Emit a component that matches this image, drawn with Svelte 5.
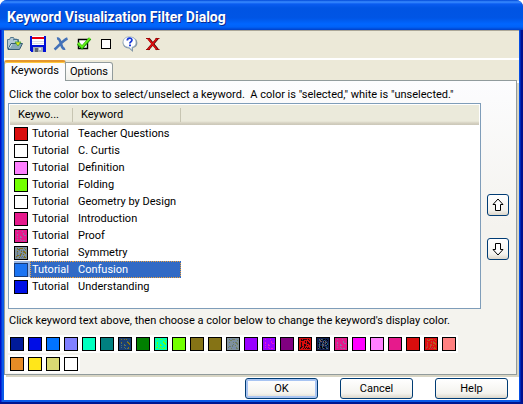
<script>
  let rows = $state([
    { word: 'Teacher Questions', color: '#d90d0d' },
    { word: 'C. Curtis', color: '#ffffff' },
    { word: 'Definition', color: '#ff80ff' },
    { word: 'Folding', color: '#73ff00' },
    { word: 'Geometry by Design', color: '#ffffff' },
    { word: 'Introduction', color: '#e61a8c' },
    { word: 'Proof', color: '#e61a8c', dots: ['#8c73a6'], density: 16 },
    { word: 'Symmetry', color: '#80929c', dots: ['#857315', '#5a7090'], density: 52 },
    { word: 'Confusion', color: '#1a73f2' },
    { word: 'Understanding', color: '#0010e6' }
  ]);
  let selected = $state(8);

  const palette = [
    { color: '#001a99' }, { color: '#000de6' }, { color: '#0073ff' }, { color: '#8080ff' },
    { color: '#00ffc0' }, { color: '#008080' },
    { color: '#1a4073', dots: ['#857315', '#4a7378'], density: 28 },
    { color: '#008000' },
    { color: '#00ffb0', dots: ['#73ff00'], density: 30 },
    { color: '#73ff00' }, { color: '#857315' }, { color: '#857315' },
    { color: '#80929c', dots: ['#6f7f60', '#7088b8'], density: 50 },
    { color: '#9900ff' },
    { color: '#9900ff', dots: ['#e61acc'], density: 18 },
    { color: '#800080' },
    { color: '#d90d0d', dots: ['#400010', '#101010'], density: 48 },
    { color: '#102050', dots: ['#6b5a60', '#000000', '#206078'], density: 60 },
    { color: '#e61a8c', dots: ['#8c73a6'], density: 20 },
    { color: '#ff00ff' }, { color: '#ff80ff' }, { color: '#e61a8c' }, { color: '#d90d0d' },
    { color: '#e01010', dots: ['#b86018', '#c03050'], density: 46 },
    { color: '#ff8080' }, { color: '#e68c26' }, { color: '#ffe61a' }, { color: '#d9d973' },
    { color: '#ffffff' }
  ];

  // Scattered single pixels of the dithered colours
  function speckles(item) {
    const out = [];
    let seed = 7;
    for (let y = 1; y < 11; y++) {
      for (let x = 1; x < 11; x++) {
        seed = (seed * 1103515245 + 12345) % 2147483648;
        const n = Math.floor(seed / 65536) % 100;
        if (n < item.density) out.push({ x, y, fill: item.dots[n % item.dots.length] });
      }
    }
    return out;
  }

  function recolor(item) {
    const row = rows[selected];
    row.color = item.color;
    row.dots = item.dots;
    row.density = item.density;
  }
</script>

{#snippet chip(item)}
  <svg width="12" height="12" viewBox="0 0 12 12" shape-rendering="crispEdges" aria-hidden="true">
    <rect width="12" height="12" fill={item.color} />
    {#if item.dots}
      {#each speckles(item) as s}
        <rect x={s.x} y={s.y} width="1" height="1" fill={s.fill} />
      {/each}
    {/if}
  </svg>
{/snippet}

<main class="dialog">
  <header class="title"><h1>Keyword Visualization Filter Dialog</h1></header>
  <div class="body">
    <div class="toolbar">
      <button aria-label="Open">
        <svg width="16" height="16" viewBox="0 0 16 16">
          <path d="M.5 12.500V3.500h2l1-2h3l1 2h4v9z" fill="#b4cad4" stroke="#54788c" />
          <path d="M1 13.500L4 7.500h11.500l-3 6z" fill="#88a9ba" stroke="#365d75" />
          <path d="M2.500 12l2.500-4" stroke="#dce8ee" fill="none" />
          <path d="M6 4c4-2 5.500 0 5 3" fill="none" stroke="#356a8c" />
          <path d="M8 6h6L11 10z" fill="#e8e51a" stroke="#3aa03a" stroke-width=".8" />
        </svg>
      </button>
      <button aria-label="Save">
        <svg width="16" height="16" viewBox="0 0 16 16" shape-rendering="crispEdges">
          <path d="M0 0h16v16H1l-1-1z" fill="#0010d8" />
          <path d="M2 0h12v9H2z" fill="#fff" />
          <path d="M2 1h12v2H2z" fill="#e80010" />
          <path d="M2 5h12v1H2zM2 7h12v1H2z" fill="#e0e0e8" />
          <path d="M3 11h10v5H3z" fill="#a8b0b8" />
          <path d="M5 12h3v4H5z" fill="#606870" />
          <path d="M9 12h2v2H9z" fill="#e8eaec" />
        </svg>
      </button>
      <button aria-label="Remove">
        <svg width="16" height="16" viewBox="0 0 16 16">
          <path d="M4 2.500C7 2 7 5 8 8s2 5.500 4 4.500M14.500 2.500C10 4 6 10 1.500 13.500" fill="none" stroke="#4472b8" stroke-width="2.600" />
        </svg>
      </button>
      <button aria-label="Select all">
        <svg width="16" height="16" viewBox="0 0 16 16">
          <path d="M2.500 3.500h9v9h-9z" fill="#fff" stroke="#000" stroke-width="1.400" />
          <path d="M2 7.500l4 4L14 2.500" fill="none" stroke="#1a9a00" stroke-width="3.200" />
          <path d="M2 7l4 4L14 2" fill="none" stroke="#66f01a" stroke-width="1.800" />
        </svg>
      </button>
      <button aria-label="Unselect all">
        <svg width="16" height="16" viewBox="0 0 16 16" shape-rendering="crispEdges">
          <path d="M2.500 3.500h9v9h-9z" fill="#fff" stroke="#000" />
        </svg>
      </button>
      <button aria-label="Help topics">
        <svg width="16" height="16" viewBox="0 0 16 16">
          <path d="M8 1c9 0 9.500 10 3 11v4l-4-3.500C-2 12-1 1 8 1z" fill="#8295a5" />
          <path d="M7.500.8c8 0 8.500 9.400 2.500 10.400v3L7 11.400C-1 11-1 .8 7.500.8z" fill="#fff" stroke="#91a8bc" stroke-width=".8" />
          <path d="M5.300 4.500c0-3 4.700-3 4.700-.5 0 1.800-2.200 1.600-2.200 3.500" fill="none" stroke="#1738d8" stroke-width="1.700" />
          <path d="M7 8.500h2v1.800H7z" fill="#1738d8" />
        </svg>
      </button>
      <button aria-label="Delete">
        <svg width="16" height="16" viewBox="0 0 16 16">
          <path d="M3.500 2.500L12.500 13.500M12.500 2.500L3 13.500" stroke="#400" stroke-width="2.600" />
          <path d="M3 2.500L12 13.500M12 2.500L3 13.500" stroke="#e01010" stroke-width="1.800" />
          <path d="M1 2.500h4M10.500 2.500h4M1 13.500h4M10.500 13.500h4" stroke="#a00808" />
        </svg>
      </button>
    </div>

    <div class="tabs" role="tablist">
      <button class="tab active" role="tab" aria-selected="true">Keywords</button>
      <button class="tab" role="tab" aria-selected="false">Options</button>
      <span class="rule"></span>
    </div>

    <section class="panel">
      <p>Click the color box to select/unselect a keyword.&nbsp; A color is "selected," white is "unselected."</p>
      <div class="work">
        <div class="list">
          <table>
            <colgroup><col class="c1" /><col class="c2" /><col class="c3" /><col /></colgroup>
            <thead>
              <tr><th colspan="2"><span>Keywo...</span></th><th><span>Keyword</span></th><th class="rest"></th></tr>
            </thead>
            <tbody>
              {#each rows as row, i}
                <tr class:selected={selected === i} onclick={() => (selected = i)}>
                  <td class="box"><button class="swatch" aria-label={row.word}>{@render chip(row)}</button></td>
                  <td class="kind">Tutorial</td>
                  <td class="word">{row.word}</td>
                  <td></td>
                </tr>
              {/each}
            </tbody>
          </table>
        </div>
        <div class="movers">
          <button class="xp" aria-label="Move up">
            <svg width="12" height="14" viewBox="0 0 12 14"><path d="M6 1L11 6.500H8.500v6h-5v-6H1z" fill="#fff" stroke="#000" /></svg>
          </button>
          <button class="xp" aria-label="Move down">
            <svg width="12" height="14" viewBox="0 0 12 14"><path d="M6 13L11 7.500H8.500v-6h-5v6H1z" fill="#fff" stroke="#000" /></svg>
          </button>
        </div>
      </div>
      <p class="hint">Click keyword text above, then choose a color below to change the keyword's display color.</p>
      <div class="palette">
        {#each palette as item}
          <button class="swatch" aria-label={item.color} onclick={() => recolor(item)}>{@render chip(item)}</button>
        {/each}
      </div>
    </section>

    <footer>
      <button class="xp default">OK</button>
      <button class="xp">Cancel</button>
      <button class="xp">Help</button>
    </footer>
  </div>
</main>

<style>
  :global(body) { margin: 0; background: #fff; }
  .dialog, .dialog * { box-sizing: border-box; }
  .dialog {
    min-height: 100vh;
    display: flex;
    flex-direction: column;
    padding: 0 4px 4px;
    border-radius: 7px 7px 0 0;
    background: linear-gradient(90deg, #0010c8 0, #0010c8 1px, #0a5ae8 2px, #0a5ae8 calc(100% - 4px), #0040e0 calc(100% - 3px), #001090 calc(100% - 2px));
    box-shadow: inset 0 -2px #001690;
    font: 11px/14px Roboto, "Open Sans", sans-serif;
    color: #000;
  }
  button { font: inherit; color: inherit; padding: 0; margin: 0; }
  svg { display: block; }
  .title {
    height: 30px;
    margin: 0 -4px;
    padding: 0 7px;
    display: flex;
    align-items: center;
    border-radius: 7px 7px 0 0;
    background: linear-gradient(#0048d8 0, #3a8cff 2px, #0a5cf0 4px, #0054e3 8px, #0055e5 18px, #0066ff 24px, #0062f8 27px, #0040c8 30px);
  }
  h1 {
    margin: 4px 0 0;
    font: bold 14px/18px Roboto, "Liberation Sans", sans-serif;
    color: #fff;
    text-shadow: 1px 1px #0a2a90;
  }
  .body { flex: 1; display: flex; flex-direction: column; background: #fff; }
  .toolbar {
    height: 28px;
    border-top: 1px solid #aca899;
    background: #ece9d8;
    display: flex;
    align-items: center;
    gap: 7px;
    padding: 0 3px 2px;
  }
  .toolbar button { border: 0; background: none; }
  .tabs {
    display: flex;
    align-items: flex-end;
    height: 23px;
    border-top: 2px solid #fff;
    background: #ece9d8;
  }
  .tab {
    height: 19px;
    min-width: 46px;
    padding: 0 4px;
    background: linear-gradient(#fff, #f0f0ea);
    border: 1px solid #919b9c;
    border-left-width: 0;
    border-radius: 0 3px 0 0;
  }
  .tab.active {
    height: 21px;
    min-width: 62px;
    padding: 0 6px 2px;
    background: #fcfcfe;
    border-top: 2px solid #e5972d;
    border-left-width: 1px;
    border-bottom: 0;
    border-radius: 3px 3px 0 0;
    box-shadow: inset 0 1px #ffc73c;
  }
  .rule { flex: 1; border-bottom: 1px solid #919b9c; margin-right: 2px; }
  .panel {
    border: solid #919b9c;
    border-width: 0 1px 1px;
    margin-right: 2px;
    box-shadow: 2px 2px #d8d5c4;
    padding: 7px 3px 3px;
    background: linear-gradient(#fcfcfe, #f4f3ee 50%);
  }
  p { margin: 0 1px 1px; white-space: nowrap; }
  .work { display: flex; gap: 6px; padding-right: 4px; }
  .list {
    flex: 1;
    height: 206px;
    padding: 1px;
    background: #fff;
    border: 1px solid #7f9db9;
  }
  table { width: 100%; table-layout: fixed; border-collapse: collapse; }
  .c1 { width: 20px; }
  .c2 { width: 43px; }
  .c3 { width: 108px; }
  th {
    height: 20px;
    padding: 0 0 0 8px;
    text-align: left;
    font-weight: normal;
    background: linear-gradient(#ebeadb 16px, #d6d2c2 18px, #cbc7b8);
  }
  th span { display: block; border-right: 1px solid #c7c5b2; box-shadow: 1px 0 #fff; }
  td { height: 17px; padding: 0; white-space: nowrap; }
  .box { padding-left: 4px; }
  .kind { padding-left: 2px; }
  .word { padding-left: 5px; }
  .selected .kind, .selected .word {
    color: #fff;
    background:
      repeating-linear-gradient(90deg, #e8a040 0 1px, #316ac5 1px 2px) top / 100% 1px no-repeat,
      repeating-linear-gradient(90deg, #e8a040 0 1px, #316ac5 1px 2px) bottom / 100% 1px no-repeat,
      repeating-linear-gradient(#e8a040 0 1px, #316ac5 1px 2px) var(--edge) / 1px 100% no-repeat,
      #316ac5;
  }
  .kind { --edge: left; }
  .word { --edge: right; }
  .swatch { display: block; width: 14px; height: 14px; border: 1px solid #000; }
  .selected .swatch { border-color: #163a78; box-shadow: 0 -2px #98b5e2, 2px 0 #98b5e2, 2px -2px #98b5e2; }
  .movers { display: flex; flex-direction: column; gap: 22px; padding-top: 91px; }
  .xp {
    display: flex;
    align-items: center;
    justify-content: center;
    background: linear-gradient(#fff, #f4f3ee 75%, #dcd7cb);
    border: 1px solid #003c74;
    border-radius: 3px;
  }
  .movers .xp { width: 22px; height: 22px; }
  .hint { margin-top: 5px; margin-bottom: 9px; }
  .palette { display: flex; flex-wrap: wrap; gap: 6px 4px; padding: 0 50px 0 2px; }
  .palette .swatch { box-shadow: 0 0 0 2px #fff; }
  footer {
    margin-top: auto;
    display: flex;
    justify-content: flex-end;
    gap: 22px;
    padding: 0 11px 1px;
  }
  footer .xp { width: 73px; height: 21px; }
  footer .default { box-shadow: inset 0 0 0 2px #a8c4f2; }
</style>
